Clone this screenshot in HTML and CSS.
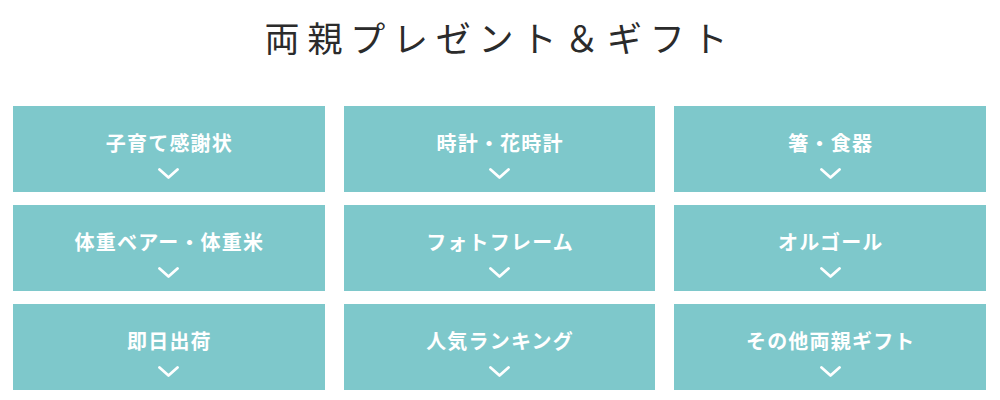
FILE: index.html
```html
<!DOCTYPE html>
<html lang="ja">
<head>
<meta charset="utf-8">
<link rel="stylesheet" href="styles.css">
</head>
<body>
<section class="gifts">
  <h1 class="title">両親プレゼント＆ギフト</h1>
  <div class="grid">
    <a class="tile"><span class="label">子育て感謝状</span><svg class="chev" viewBox="0 0 21 11"><path d="M1.5 1.5 L10.5 9.5 L19.5 1.5"/></svg></a>
    <a class="tile"><span class="label">時計・花時計</span><svg class="chev" viewBox="0 0 21 11"><path d="M1.5 1.5 L10.5 9.5 L19.5 1.5"/></svg></a>
    <a class="tile"><span class="label">箸・食器</span><svg class="chev" viewBox="0 0 21 11"><path d="M1.5 1.5 L10.5 9.5 L19.5 1.5"/></svg></a>
    <a class="tile"><span class="label">体重ベアー・体重米</span><svg class="chev" viewBox="0 0 21 11"><path d="M1.5 1.5 L10.5 9.5 L19.5 1.5"/></svg></a>
    <a class="tile"><span class="label">フォトフレーム</span><svg class="chev" viewBox="0 0 21 11"><path d="M1.5 1.5 L10.5 9.5 L19.5 1.5"/></svg></a>
    <a class="tile"><span class="label">オルゴール</span><svg class="chev" viewBox="0 0 21 11"><path d="M1.5 1.5 L10.5 9.5 L19.5 1.5"/></svg></a>
    <a class="tile"><span class="label">即日出荷</span><svg class="chev" viewBox="0 0 21 11"><path d="M1.5 1.5 L10.5 9.5 L19.5 1.5"/></svg></a>
    <a class="tile"><span class="label">人気ランキング</span><svg class="chev" viewBox="0 0 21 11"><path d="M1.5 1.5 L10.5 9.5 L19.5 1.5"/></svg></a>
    <a class="tile"><span class="label">その他両親ギフト</span><svg class="chev" viewBox="0 0 21 11"><path d="M1.5 1.5 L10.5 9.5 L19.5 1.5"/></svg></a>
  </div>
</section>
</body>
</html>
```

FILE: styles.css
```css
html, body {
  margin: 0;
  padding: 0;
  background: #ffffff;
}
body {
  font-family: "Noto Sans CJK JP", "Noto Sans", sans-serif;
}
.gifts {
  width: 1000px;
}
.title {
  margin: 0;
  padding-top: 14px;
  height: 46px;
  line-height: 46px;
  font-size: 35px;
  font-weight: 400;
  letter-spacing: 7.8px;
  color: #2b2b2b;
  text-align: center;
}
.grid {
  margin: 46px 0 0 13px;
  width: 973px;
  display: grid;
  grid-template-columns: repeat(3, 1fr);
  grid-auto-rows: 86px;
  column-gap: 19px;
  row-gap: 13px;
}
.tile {
  background: #7ec8cb;
  display: flex;
  flex-direction: column;
  align-items: center;
  padding-top: 25px;
  box-sizing: border-box;
  text-decoration: none;
}
.label {
  color: #ffffff;
  font-size: 20px;
  font-weight: 700;
  line-height: 24px;
  letter-spacing: 1.2px;
  margin-right: -1.2px;
}
.chev {
  margin-top: 13px;
  width: 21px;
  height: 11px;
  fill: none;
  stroke: #ffffff;
  stroke-width: 2.8;
  stroke-linecap: round;
  stroke-linejoin: round;
}
```
